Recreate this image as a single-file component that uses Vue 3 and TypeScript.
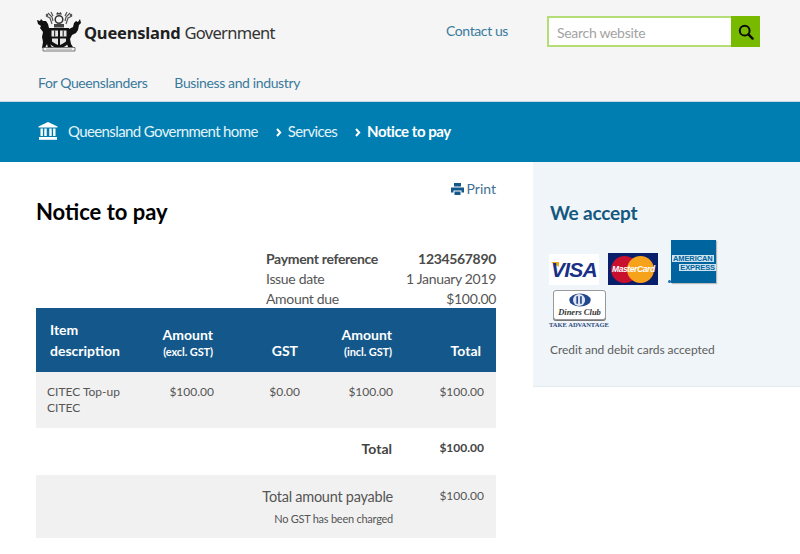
<template>
  <div class="page">
    <header class="site-header">
      <div class="header-top">
        <a class="logo">
          <svg class="crest" width="45" height="42" viewBox="0 0 45 42">
            <!-- lion -->
            <path d="M0 9l3 1 1-2 2 2 3 0 2 3 1 4 3 4v5l-2 4 1 5 2 2h-5l-1-4-2 4H5l1-6-1-5 1-5-3-4 1-2-3-2z" fill="#111" />
            <!-- brolga side -->
            <path d="M43 8l1 4-2 2-1 5-2 3-4 2-2 4 1 5 2 3h-5l-1-3-2-1 1-8 3-6 4-2 1-4 2-2 2 1z" fill="#111" />
            <!-- shield -->
            <path d="M12 17h20v13c0 4-5 6-10 8-5-2-10-4-10-8z" fill="#111" />
            <path d="M14.500 19.500h6.500v6h-6.500zM23 19.500h6.500v6H23zM15 27.500h6v6.500l-3-1.500-3-2zM23 27.500h6v3l-3 2-3 1.500z" fill="#e6e6e6" />
            <path d="M17.700 19.500v6M26.200 19.500v6M21.900 17v20" stroke="#111" stroke-width="1" />
            <!-- crown and sprays -->
            <path d="M17 13h10v3.500H17z" fill="#444" />
            <circle cx="22" cy="8.500" r="3.800" fill="none" stroke="#333" stroke-width="1.500" />
            <path d="M19 3.500l1.500-2.500 1.500 1.500 1.500-1.500L25 3.500z" fill="#333" />
            <path d="M9 5l4 2 2 6M11 2l4 4 1 4M14 1l2 4M35 5l-4 2-2 6M33 2l-4 4-1 4M30 1l-2 4" fill="none" stroke="#555" stroke-width="1.200" />
            <circle cx="10" cy="4" r="1.300" fill="#555" />
            <circle cx="34" cy="4" r="1.300" fill="#555" />
            <!-- base -->
            <path d="M6 36.500h32v3.500H6z" fill="#f5f5f5" stroke="#555" stroke-width="0.800" />
            <path d="M9 38.200h26" stroke="#999" stroke-width="0.800" />
          </svg>
          <span class="logo-text"><b>Queensland</b> <span class="gov">Government</span></span>
        </a>
        <a class="contact">Contact us</a>
        <form class="search" @submit.prevent>
          <input type="text" placeholder="Search website" />
          <button type="submit" aria-label="Search">
            <svg width="16" height="16" viewBox="0 0 16 16">
              <circle cx="6.700" cy="6.700" r="4.900" fill="none" stroke="#0a0a0a" stroke-width="2" />
              <path d="M10.400 10.400l4.200 4.200" stroke="#0a0a0a" stroke-width="2.400" stroke-linecap="round" />
            </svg>
          </button>
        </form>
      </div>
      <nav class="audience">
        <a v-for="link in audienceLinks" :key="link">{{ link }}</a>
      </nav>
    </header>

    <div class="breadcrumbs">
      <svg class="home" width="20" height="18" viewBox="0 0 20 18">
        <path d="M10 0l9.500 4.600v1H.5v-1z" fill="#fff" />
        <path d="M2.500 6.600h2.400v7.400H2.500zM6.300 6.600h2.400v7.400H6.300zM11.300 6.600h2.400v7.400h-2.400zM15.100 6.600h2.400v7.400h-2.400z" fill="#fff" />
        <path d="M1 15h18v2.800H1z" fill="#fff" />
      </svg>
      <a class="crumb-home">Queensland Government home</a>
      <template v-for="crumb in crumbs" :key="crumb.label">
        <svg class="chevron" width="6" height="9" viewBox="0 0 6 9">
          <path d="M1 1l3.200 3.500L1 8" fill="none" stroke="#fff" stroke-width="2" />
        </svg>
        <a :class="{ current: crumb.current }">{{ crumb.label }}</a>
      </template>
    </div>

    <div class="layout">
      <main class="content">
        <a class="print">
          <svg width="13" height="12" viewBox="0 0 13 12">
            <path d="M3 0h7v3.500H3z M0 4.500h13V9.500h-2.500V7.500h-8V9.500H0z M3.500 8.500h6V12h-6z" fill="#13578b" />
          </svg>
          Print
        </a>
        <h1>Notice to pay</h1>

        <dl class="summary">
          <div v-for="row in summaryRows" :key="row.label" :class="{ strong: row.strong }">
            <dt>{{ row.label }}</dt>
            <dd>{{ row.value }}</dd>
          </div>
        </dl>

        <table class="items">
          <thead>
            <tr>
              <th class="col-desc">Item description</th>
              <th class="col-excl">Amount<small>(excl. GST)</small></th>
              <th class="col-gst">GST</th>
              <th class="col-incl">Amount<small>(incl. GST)</small></th>
              <th class="col-total">Total</th>
            </tr>
          </thead>
          <tbody>
            <tr class="item-row">
              <td class="cell-desc">CITEC Top-up<br />CITEC</td>
              <td>$100.00</td>
              <td>$0.00</td>
              <td>$100.00</td>
              <td class="cell-total">$100.00</td>
            </tr>
            <tr class="total-row">
              <td colspan="4" class="total-label">Total</td>
              <td class="cell-total">$100.00</td>
            </tr>
            <tr class="payable-row">
              <td colspan="4" class="payable-label">
                Total amount payable
                <small>No GST has been charged</small>
              </td>
              <td class="cell-total">$100.00</td>
            </tr>
          </tbody>
        </table>
      </main>

      <aside class="sidebar">
        <h2>We accept</h2>
        <div class="cards">
          <div class="card visa"><i></i><span>VISA</span></div>
          <div class="card mastercard">
            <i class="mc-red"></i>
            <i class="mc-orange"></i>
            <span>MasterCard</span>
          </div>
          <div class="amex-wrap">
            <i class="amex-dot"></i>
            <div class="card amex">
              <span class="amex-top">AMERICAN</span>
              <span class="amex-bottom">EXPRESS</span>
            </div>
          </div>
          <div class="diners">
            <div class="diners-box">
              <svg width="24" height="14" viewBox="0 0 24 15">
                <ellipse cx="12" cy="7.500" rx="11.500" ry="7" fill="#24488f" />
                <circle cx="11" cy="7.500" r="6.500" fill="#dfe5ef" />
                <path d="M9 3.500v8M13 3.500v8" stroke="#24488f" stroke-width="1.800" />
              </svg>
              <span>Diners Club</span>
            </div>
            <span class="diners-tag">TAKE ADVANTAGE</span>
          </div>
        </div>
        <p>Credit and debit cards accepted</p>
      </aside>
    </div>
  </div>
</template>

<script setup lang="ts">
interface SummaryRow {
  label: string
  value: string
  strong?: boolean
}

const audienceLinks: string[] = ['For Queenslanders', 'Business and industry']

const crumbs = [
  { label: 'Services', current: false },
  { label: 'Notice to pay', current: true },
]

const summaryRows: SummaryRow[] = [
  { label: 'Payment reference', value: '1234567890', strong: true },
  { label: 'Issue date', value: '1 January 2019' },
  { label: 'Amount due', value: '$100.00' },
]
</script>

<style>
html,
body {
  background: #fff;
}
</style>

<style scoped>
.page {
  height: 554px;
  overflow: hidden;
  font-family: Lato, "Open Sans", sans-serif;
  color: #4a4a4a;
}

.site-header {
  height: 101px;
  background: #f5f5f5;
  border-bottom: 1px solid #c4d9e4;
}

.header-top {
  display: flex;
  align-items: flex-start;
  height: 66px;
  padding: 0 40px 0 37px;
}

.logo {
  display: flex;
  align-items: center;
  margin-top: 11px;
  width: 409px;
}

.crest {
  flex: none;
}

.logo-text {
  margin-left: 2px;
  font-family: "Noto Sans", sans-serif;
  font-size: 16.5px;
  letter-spacing: -0.2px;
  color: #333;
  white-space: nowrap;
}

.logo-text b {
  color: #1f1f1f;
  font-weight: 700;
}

.gov {
  letter-spacing: -0.7px;
}

.contact {
  margin-top: 22px;
  width: 101px;
  font-size: 14px;
  line-height: 18px;
  letter-spacing: -0.4px;
  color: #3a7a9c;
}

.search {
  display: flex;
  margin-top: 16px;
  width: 213px;
  height: 31px;
}

.search input {
  flex: 1;
  min-width: 0;
  box-sizing: border-box;
  height: 31px;
  padding: 1px 8px 0;
  border: 2px solid #b4dd76;
  border-right: none;
  border-radius: 0;
  background: #fff;
  font-family: inherit;
  font-size: 14px;
  letter-spacing: -0.3px;
  outline: none;
}

.search input::placeholder {
  color: #a3a3a3;
  opacity: 1;
}

.search button {
  display: flex;
  align-items: center;
  justify-content: center;
  width: 29px;
  height: 31px;
  padding: 0;
  border: none;
  background: #78ba00;
}

.audience {
  display: flex;
  gap: 27px;
  padding-left: 38px;
  font-size: 14px;
  line-height: 34px;
  letter-spacing: -0.37px;
  color: #3a7a9c;
}

.breadcrumbs {
  display: flex;
  align-items: center;
  height: 60px;
  box-sizing: border-box;
  padding: 0 0 2px 38px;
  background: #007eb1;
  font-size: 15px;
  letter-spacing: -0.62px;
  color: #e4f3f9;
}

.home {
  margin-right: 10px;
}

.chevron {
  margin: 2px 6px 0 18px;
}

.current {
  font-weight: 700;
  letter-spacing: -0.45px;
  color: #fff;
}

.layout {
  display: flex;
  align-items: flex-start;
}

.content {
  width: 460px;
  margin-left: 36px;
  padding-top: 19px;
}

.print {
  display: flex;
  justify-content: flex-end;
  align-items: center;
  gap: 3px;
  font-size: 14px;
  line-height: 16px;
  color: #3f6f92;
}

.content h1 {
  margin: 0;
  font-size: 22px;
  line-height: 30px;
  font-weight: 700;
  color: #000;
}

.summary {
  margin: 22px 0 0 230px;
  font-size: 14px;
  line-height: 20px;
  letter-spacing: -0.33px;
  color: #565656;
}

.summary div {
  display: flex;
  justify-content: space-between;
}

.summary dd {
  margin: 0;
}

.summary .strong {
  font-weight: 700;
  color: #4a4a4a;
}

.items {
  width: 460px;
  margin-top: -1px;
  border-collapse: collapse;
  table-layout: fixed;
  font-size: 12px;
  color: #555;
}

.items thead tr {
  height: 64px;
  background: #14588b;
}

.items th {
  box-sizing: border-box;
  padding: 0 0 14px;
  vertical-align: bottom;
  font-size: 14px;
  line-height: 21px;
  font-weight: 700;
  color: #fff;
  text-align: right;
}

.items th small {
  display: block;
  font-size: 11px;
  line-height: 13px;
  font-weight: 700;
  letter-spacing: -0.1px;
}

.items th.col-desc {
  width: 100px;
  padding: 0 0 11px 14px;
  text-align: left;
}

.items th.col-excl {
  width: 79px;
  padding-right: 2px;
}

.items th.col-gst {
  width: 86px;
  padding: 0 3px 11px 0;
}

.items th.col-incl {
  width: 93px;
  padding-right: 2px;
}

.items th.col-total {
  padding: 0 15px 11px 0;
}

.item-row {
  height: 56px;
  background: #f1f1f1;
  vertical-align: top;
}

.item-row td {
  padding-top: 12px;
  line-height: 16px;
  text-align: right;
}

.item-row .cell-desc {
  padding: 12px 0 0 11px;
  text-align: left;
}

.items .cell-total {
  padding-right: 12px;
  text-align: right;
}

.total-row {
  height: 47px;
}

.total-label {
  padding: 0 2px 6px 0;
  font-size: 14px;
  font-weight: 700;
  text-align: right;
  color: #444;
}

.total-row .cell-total {
  padding-bottom: 10px;
  font-weight: 700;
  color: #444;
}

.payable-row {
  height: 63px;
  background: #f1f1f1;
  vertical-align: top;
}

.payable-row .cell-total {
  padding-top: 13px;
  line-height: 16px;
}

.payable-label {
  padding-top: 13px;
  font-size: 14.5px;
  line-height: 18px;
  letter-spacing: -0.25px;
  text-align: right;
}

.payable-label small {
  display: block;
  margin-top: 6px;
  font-size: 11px;
  line-height: 14px;
  letter-spacing: -0.25px;
}

.sidebar {
  box-sizing: border-box;
  width: 267px;
  height: 225px;
  margin-left: 37px;
  padding: 39px 17px 0;
  background: #f0f5f9;
  border-bottom: 1px solid #e2ebf2;
}

.sidebar h2 {
  margin: 0;
  font-size: 19px;
  line-height: 24px;
  font-weight: 700;
  letter-spacing: -0.2px;
  color: #14587f;
}

.cards {
  display: flex;
  flex-wrap: wrap;
  align-items: flex-end;
  width: 190px;
  margin: 15px 0 0 -1px;
}

.card {
  position: relative;
  overflow: hidden;
  box-sizing: border-box;
}

.visa {
  display: flex;
  align-items: center;
  justify-content: center;
  width: 50px;
  height: 31px;
  margin-right: 9px;
  background: #fff;
}

.visa i {
  position: absolute;
  left: 2px;
  top: 8px;
  width: 8px;
  height: 5px;
  background: #f0a81e;
  clip-path: polygon(0 0, 100% 0, 100% 100%);
}

.visa span {
  position: relative;
  font-family: "Liberation Sans", sans-serif;
  font-size: 21px;
  font-weight: 700;
  font-style: italic;
  letter-spacing: -0.8px;
  color: #1a2f86;
}

.mastercard {
  width: 50px;
  height: 32px;
  margin-right: 9px;
  background: #0a1f6b;
}

.mc-red,
.mc-orange {
  position: absolute;
  top: 3px;
  width: 27px;
  height: 27px;
  border-radius: 50%;
}

.mc-red {
  left: 3px;
  background: #c8102e;
}

.mc-orange {
  left: 19px;
  background: #f6a21a;
}

.mastercard span {
  position: absolute;
  left: 4px;
  top: 11px;
  font-family: "Liberation Sans", sans-serif;
  font-size: 8.5px;
  font-weight: 700;
  font-style: italic;
  letter-spacing: -0.4px;
  color: #fff;
  white-space: nowrap;
}

.amex-wrap {
  position: relative;
  width: 49px;
  height: 45px;
  padding-left: 4px;
  box-sizing: border-box;
}

.amex-dot {
  position: absolute;
  left: 1px;
  top: 40px;
  width: 3px;
  height: 3px;
  border-radius: 50%;
  background: #1d6da5;
}

.amex {
  width: 45px;
  height: 43px;
  background: #00659f;
  box-shadow: 1px 1px 1px #bbb;
  overflow: visible;
}

.amex span {
  position: absolute;
  font-family: "Liberation Sans", sans-serif;
  font-size: 7.5px;
  line-height: 7px;
  font-weight: 700;
  color: #00659f;
  background: #cfe3ef;
  letter-spacing: -0.1px;
}

.amex-top {
  left: 1px;
  top: 15px;
  padding: 0 1px;
}

.amex-bottom {
  right: 0;
  top: 24px;
  padding: 0 1px;
}

.diners {
  width: 60px;
  margin-top: 5px;
}

.diners-box {
  box-sizing: border-box;
  display: flex;
  flex-direction: column;
  align-items: center;
  width: 53px;
  height: 30px;
  margin-left: 4px;
  padding-top: 2px;
  background: #fff;
  border: 1px solid #999;
  border-radius: 3px;
  box-shadow: 0 1px 0 #777;
}

.diners-box span {
  font-family: "Liberation Serif", serif;
  font-size: 8.5px;
  line-height: 10px;
  font-style: italic;
  font-weight: 700;
  color: #333;
  white-space: nowrap;
}

.diners-tag {
  display: block;
  margin-top: 1px;
  font-family: "Liberation Serif", serif;
  font-size: 6.5px;
  line-height: 7px;
  font-weight: 700;
  color: #2c4a80;
  white-space: nowrap;
}

.sidebar p {
  margin: 14px 0 0;
  font-size: 12px;
  line-height: 16px;
  letter-spacing: -0.05px;
  color: #5d5d5d;
}
</style>
